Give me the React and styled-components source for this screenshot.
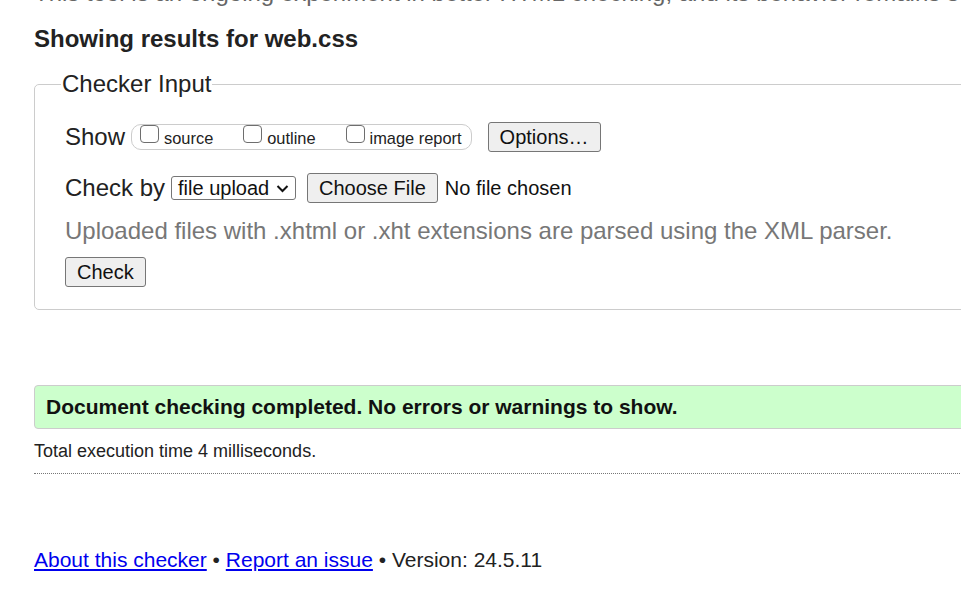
import React from "react";
import styled, { createGlobalStyle } from "styled-components";

const GlobalStyle = createGlobalStyle`
  html, body {
    margin: 0;
    padding: 0;
    background: #fff;
    overflow: hidden;
  }
  body {
    font-family: "Liberation Sans", Arial, sans-serif;
    color: #222;
  }
`;

const Page = styled.div`
  width: 1100px;
  padding: 0 0 0 34px;
  box-sizing: border-box;
`;

const Intro = styled.p`
  margin: -21px 0 0 0;
  font-size: 24px;
  line-height: 28px;
  color: #666;
  white-space: nowrap;
`;

const Heading = styled.h2`
  margin: 18px 0 0 0;
  font-size: 24px;
  line-height: 28px;
  font-weight: bold;
  color: #222;
`;

const Fieldset = styled.fieldset`
  margin: 17px 0 0 0;
  padding: 0 30px 22px 30px;
  border: 1px solid #ccc;
  border-radius: 5px;
  display: flex;
  flex-direction: column;
`;

const Legend = styled.legend`
  font-size: 24px;
  line-height: 28px;
  padding: 0 1px;
  margin-left: -4px;
  color: #222;
`;

const Row = styled.div`
  display: flex;
  align-items: center;
  height: 30px;
  font-size: 24px;
  line-height: 28px;
  color: #222;
  margin-top: ${(p) => p.$top || 0}px;
`;

const RowLabel = styled.span`
  margin-right: 6px;
`;

const ShowGroup = styled.span`
  display: inline-flex;
  align-items: flex-start;
  height: 26px;
  box-sizing: border-box;
  border: 1px solid #ccc;
  border-radius: 10px;
  padding: 0 9px 0 8px;
  gap: 30px;
  margin-right: 16px;
`;

const CheckLabel = styled.label`
  display: inline-flex;
  align-items: flex-start;
  gap: 5px;
`;

const Box = styled.span`
  display: inline-block;
  width: 19px;
  height: 18px;
  box-sizing: border-box;
  border: 1px solid #6e6e6e;
  border-radius: 4px;
  background: #fff;
`;

const CheckText = styled.span`
  margin-top: 3px;
  font-size: 16.4px;
  line-height: 20px;
  color: #222;
`;

const Button = styled.button`
  font-family: "Liberation Sans", Arial, sans-serif;
  font-size: 20px;
  line-height: 24px;
  color: #111;
  background: #efefef;
  border: 1px solid #767676;
  border-radius: 3px;
  height: 30px;
  box-sizing: border-box;
  padding: 0 11px;
  margin: 0;
  cursor: pointer;
`;

const Select = styled.span`
  display: inline-flex;
  align-items: center;
  height: 24px;
  width: 125px;
  box-sizing: border-box;
  border: 1px solid #767676;
  border-radius: 3px;
  padding: 0 6px 0 6px;
  font-size: 20px;
  line-height: 22px;
  color: #111;
  margin-right: 11px;
  justify-content: space-between;
`;

const NoFile = styled.span`
  font-size: 20px;
  margin-left: 7px;
  color: #111;
`;

const Hint = styled.p`
  margin: 14px 0 0 0;
  font-size: 24px;
  line-height: 28px;
  color: #777;
`;

const Success = styled.div`
  margin-top: 75px;
  background: #ccffcc;
  border: 1px solid #ccc;
  border-radius: 4px;
  height: 44px;
  box-sizing: border-box;
  display: flex;
  align-items: center;
  padding-left: 11px;
  font-size: 21px;
  font-weight: bold;
  color: #111;
`;

const Timing = styled.p`
  margin: 12px 0 0 0;
  font-size: 18px;
  line-height: 21px;
  color: #222;
`;

const Rule = styled.hr`
  margin: 11px 0 0 0;
  border: 0;
  border-top: 1px dotted #777;
  height: 0;
`;

const Footer = styled.p`
  margin: 74px 0 0 0;
  font-size: 21px;
  line-height: 24px;
  color: #222;
`;

const FootLink = styled.a`
  color: #00e;
  text-decoration: underline;
`;

const Chevron = () => (
  <svg width="13" height="9" viewBox="0 0 13 9" aria-hidden="true">
    <path d="M1.5 2 L6.5 7 L11.5 2" fill="none" stroke="#111" strokeWidth="2" />
  </svg>
);

export default function App() {
  return (
    <>
      <GlobalStyle />
      <Page>
        <Intro>
          This tool is an ongoing experiment in better HTML checking, and its behavior remains subject to change
        </Intro>
        <Heading>Showing results for web.css</Heading>
        <Fieldset>
          <Legend>Checker Input</Legend>
          <Row $top={24}>
            <RowLabel>Show</RowLabel>
            <ShowGroup>
              <CheckLabel><Box /><CheckText>source</CheckText></CheckLabel>
              <CheckLabel><Box /><CheckText>outline</CheckText></CheckLabel>
              <CheckLabel><Box /><CheckText>image report</CheckText></CheckLabel>
            </ShowGroup>
            <Button>Options…</Button>
          </Row>
          <Row $top={21}>
            <RowLabel>Check by</RowLabel>
            <Select>file upload <Chevron /></Select>
            <Button>Choose File</Button>
            <NoFile>No file chosen</NoFile>
          </Row>
          <Hint>Uploaded files with .xhtml or .xht extensions are parsed using the XML parser.</Hint>
          <Row $top={12}>
            <Button>Check</Button>
          </Row>
        </Fieldset>
        <Success>Document checking completed. No errors or warnings to show.</Success>
        <Timing>Total execution time 4 milliseconds.</Timing>
        <Rule />
        <Footer>
          <FootLink href="#">About this checker</FootLink> • <FootLink href="#">Report an issue</FootLink> • Version: 24.5.11
        </Footer>
      </Page>
    </>
  );
}
